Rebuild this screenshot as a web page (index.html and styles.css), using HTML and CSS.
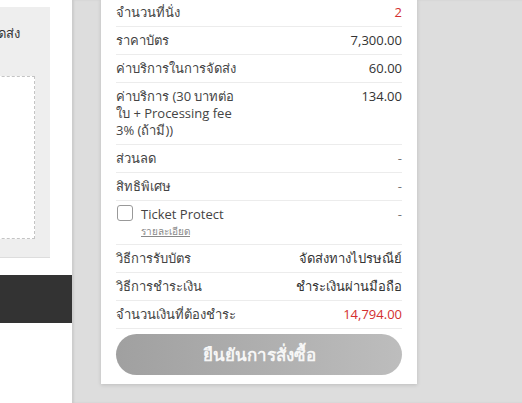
FILE: index.html
```html
<!DOCTYPE html>
<html lang="th">
<head>
<meta charset="UTF-8">
<meta name="viewport" content="width=device-width, initial-scale=1.0">
<title>สรุปคำสั่งซื้อ</title>
<link rel="stylesheet" href="styles.css">
</head>
<body>

<div class="left-col">
  <div class="address-panel">
    <div class="address-title">ที่อยู่ในการจัดส่ง</div>
    <div class="address-box"></div>
  </div>
  <div class="dark-bar"></div>
</div>

<div class="main-col">
  <div class="summary-card">
    <div class="row">
      <span class="label">จำนวนที่นั่ง</span>
      <span class="value red">2</span>
    </div>
    <div class="row">
      <span class="label">ราคาบัตร</span>
      <span class="value">7,300.00</span>
    </div>
    <div class="row">
      <span class="label">ค่าบริการในการจัดส่ง</span>
      <span class="value">60.00</span>
    </div>
    <div class="row">
      <span class="label narrow">ค่าบริการ (30 บาทต่อใบ + Processing fee 3% (ถ้ามี))</span>
      <span class="value">134.00</span>
    </div>
    <div class="row">
      <span class="label">ส่วนลด</span>
      <span class="value muted">-</span>
    </div>
    <div class="row">
      <span class="label">สิทธิพิเศษ</span>
      <span class="value muted">-</span>
    </div>
    <div class="row">
      <div class="protect">
        <span class="checkbox"></span>
        <div>
          <div class="label">Ticket Protect</div>
          <a class="detail-link" href="#">รายละเอียด</a>
        </div>
      </div>
      <span class="value muted">-</span>
    </div>
    <div class="row">
      <span class="label">วิธีการรับบัตร</span>
      <span class="value">จัดส่งทางไปรษณีย์</span>
    </div>
    <div class="row">
      <span class="label">วิธีการชำระเงิน</span>
      <span class="value">ชำระเงินผ่านมือถือ</span>
    </div>
    <div class="row">
      <span class="label">จำนวนเงินที่ต้องชำระ</span>
      <span class="value red">14,794.00</span>
    </div>
    <button class="confirm-btn">ยืนยันการสั่งซื้อ</button>
  </div>
</div>

</body>
</html>
```

FILE: styles.css
```css
body {
  margin: 0;
  padding: 0;
  height: 403px;
  overflow: hidden;
  display: flex;
  background: #fff;
  font-family: 'Open Sans', 'Noto Sans', sans-serif;
  font-size: 13px;
  color: #444;
}
.left-col {
  width: 72px;
  flex-shrink: 0;
  overflow: hidden;
  background: #fff;
}
.address-panel {
  width: 300px;
  margin-left: -250px;
  margin-top: 7px;
  height: 251px;
  box-sizing: border-box;
  padding: 17px 15px 0 0;
  background: #eee;
  border-bottom: 1px solid #ddd;
}
.address-title {
  line-height: 18px;
  text-align: right;
  padding-right: 15px;
  color: #333;
}
.address-box {
  margin: 34px 0 0 100px;
  height: 163px;
  box-sizing: border-box;
  background: #fff;
  border: 1px dashed #c4c4c4;
}
.dark-bar {
  margin-top: 17px;
  height: 48px;
  background: #333;
}
.main-col {
  flex: 1;
  background: #dddddd;
  box-shadow: inset 2px 0 2px rgba(0, 0, 0, 0.08);
  padding-left: 29px;
}
.summary-card {
  width: 316px;
  box-sizing: border-box;
  margin-top: -1px;
  padding: 0 15px 9px;
  background: #fff;
  box-shadow: 0 1px 4px rgba(0, 0, 0, 0.15);
}
.row {
  display: flex;
  justify-content: space-between;
  align-items: flex-start;
  padding: 5px 0;
  line-height: 17px;
  border-bottom: 1px solid #ececec;
}
.label {
  color: #444;
}
.label.narrow {
  width: 128px;
}
.value {
  color: #333;
  text-align: right;
}
.value.red {
  color: #d32f2f;
}
.value.muted {
  color: #777;
}
.protect {
  display: flex;
  gap: 8px;
  align-items: flex-start;
}
.checkbox {
  width: 16px;
  height: 16px;
  margin: -1px 0 0 1px;
  box-sizing: border-box;
  border: 1.5px solid #999;
  border-radius: 3px;
  background: #fff;
}
.detail-link {
  display: block;
  font-size: 10px;
  line-height: 16px;
  color: #888;
}
.confirm-btn {
  display: block;
  width: 100%;
  height: 41px;
  margin-top: 5px;
  border: none;
  border-radius: 21px;
  background: linear-gradient(to right, #a0a0a0, #bdbdbd);
  color: #f6f6f6;
  font-family: inherit;
  font-size: 17px;
  font-weight: bold;
  cursor: pointer;
}
```
